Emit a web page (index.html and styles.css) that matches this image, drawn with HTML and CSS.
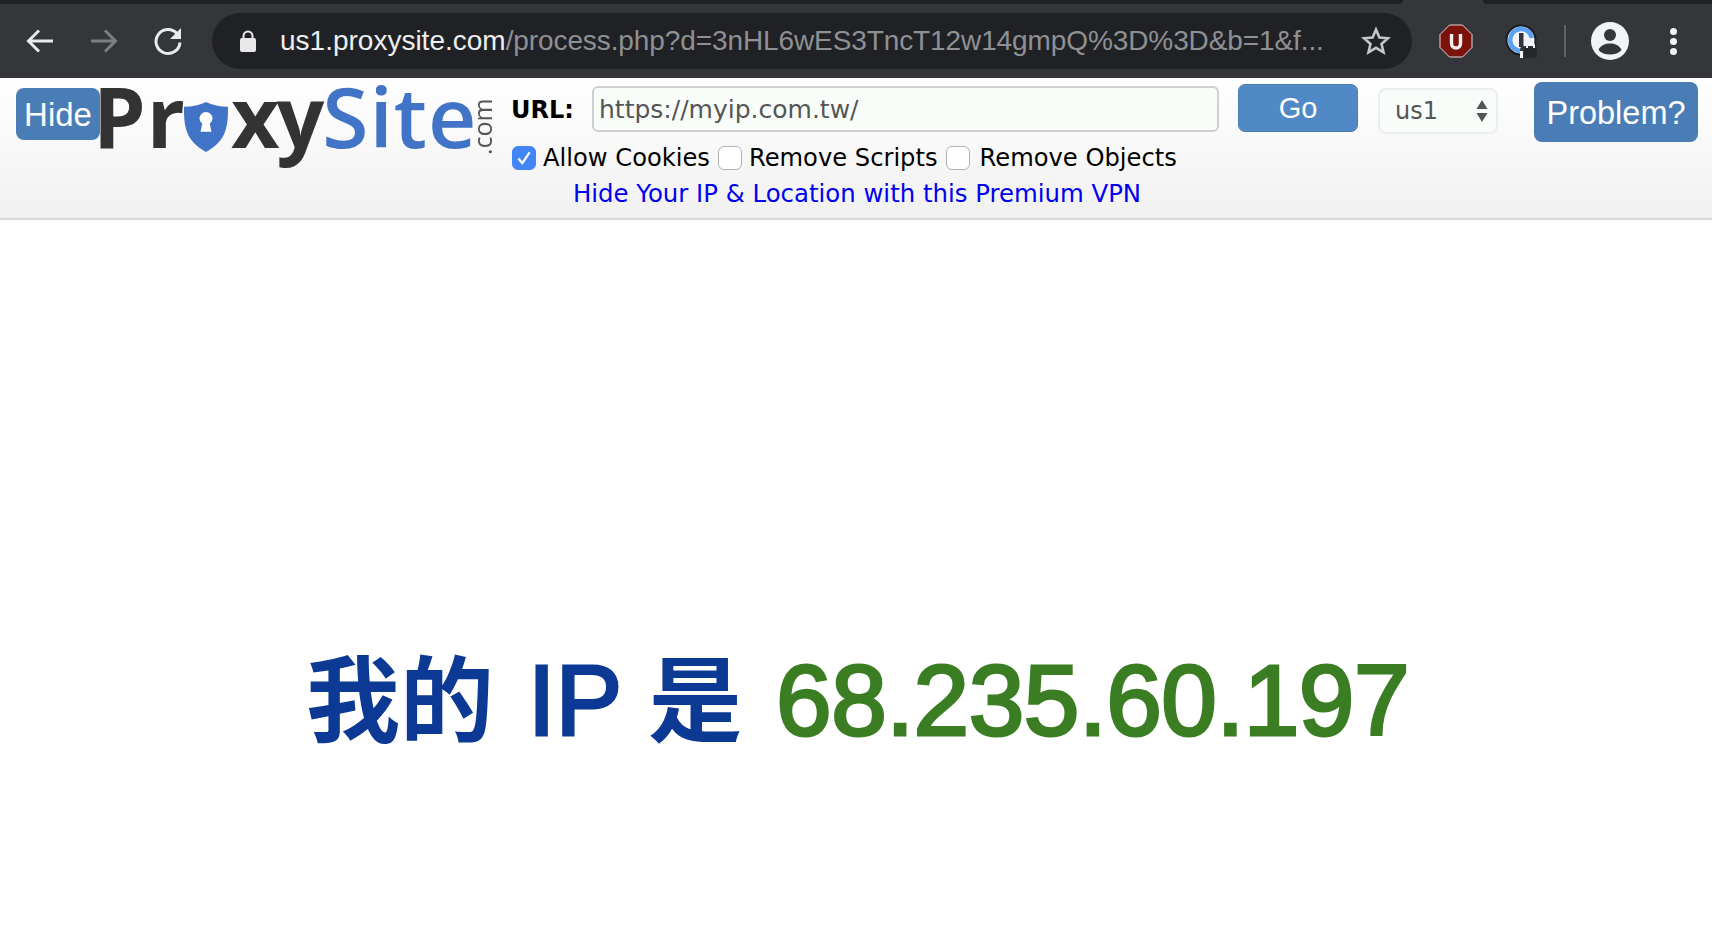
FILE: index.html
```html
<!DOCTYPE html>
<html lang="zh-Hant">
<head>
    <meta charset="UTF-8">
    <title>ProxySite - myip.com.tw</title>
    <link rel="stylesheet" href="styles.css">
</head>
<body>
    <!-- Browser chrome -->
    <div class="tabstrip">
        <div class="tab-left"></div>
        <div class="tab-right"></div>
    </div>
    <div class="toolbar">
        <svg class="nav-icon" width="32" height="32" viewBox="0 0 32 32"><path d="M29 16H5M15 5.500L4.500 16 15 26.500" fill="none" stroke="#e8eaed" stroke-width="3"/></svg>
        <svg class="nav-icon" width="32" height="32" viewBox="0 0 32 32"><path d="M3 16h24M17 5.500L27.500 16 17 26.500" fill="none" stroke="#7d7e81" stroke-width="3"/></svg>
        <svg class="nav-icon" width="32" height="32" viewBox="0 0 32 32"><path d="M25 8.500A12 12 0 1 0 28 17.500" fill="none" stroke="#e8eaed" stroke-width="3"/><path d="M29 3v11H18z" fill="#e8eaed"/></svg>

        <div class="omnibox">
            <svg class="lock" width="16" height="22" viewBox="0 0 16 22"><path d="M3.500 9V6a4.500 4.500 0 0 1 9 0v3" fill="none" stroke="#e8e8e8" stroke-width="2"/><rect x="0" y="8" width="16" height="14" rx="2" fill="#e8e8e8"/></svg>
            <div class="address"><span class="host">us1.proxysite.com</span>/process.php?d=3nHL6wES3TncT12w14gmpQ%3D%3D&amp;b=1&amp;f...</div>
            <svg class="star" width="30" height="30" viewBox="0 0 30 30"><path d="M15 3.500l3.400 8 8.600.7-6.500 5.700 2 8.400L15 21.800l-7.500 4.500 2-8.400L3 12.200l8.600-.7z" fill="none" stroke="#c4c5c7" stroke-width="2.600"/></svg>
        </div>

        <div class="extensions">
            <svg width="34" height="34" viewBox="0 0 34 34"><path d="M10.500 1h13L33 10.500v13L23.500 33h-13L1 23.500v-13z" fill="#7a130b" stroke="#e6d8d6" stroke-width="1"/><path d="M12.500 10v9.500a4.500 4.500 0 0 0 9 0V10" fill="none" stroke="#f4eeee" stroke-width="3.400"/></svg>
            <svg class="onepass" width="34" height="34" viewBox="0 0 34 34"><circle cx="16" cy="16" r="15.500" fill="#1b1c1f"/><circle cx="16" cy="16" r="13.500" fill="#f2f5fa"/><path d="M16 27A11 11 0 1 1 27 14" fill="none" stroke="#5aa2f3" stroke-width="4.500"/><rect x="14" y="9" width="4.500" height="14" fill="#33353a"/><path d="M15 34v-8a4 4 0 0 1 4-4h15v12z" fill="#35363a"/><rect x="15" y="27" width="3" height="7" fill="#f2f5fa"/><rect x="19" y="23" width="13" height="11" rx="2" fill="#26272a"/><path d="M22 24v-2.500a3.500 3.500 0 0 1 7 0V24" fill="none" stroke="#f2f5fa" stroke-width="2"/></svg>
            <div class="divider"></div>
            <svg class="avatar" width="38" height="38" viewBox="0 0 38 38"><circle cx="19" cy="19" r="19" fill="#f1f3f4"/><circle cx="19" cy="13" r="6" fill="#35363a"/><path d="M7.500 28c2-5 7-6.500 11.500-6.500S28.500 23 30.500 28c-2.600 3-6.800 4.500-11.500 4.500S10.100 31 7.500 28z" fill="#35363a"/></svg>
            <div class="kebab"><i></i><i></i><i></i></div>
        </div>
    </div>

    <!-- Proxy bar -->
    <div class="proxybar">
        <a class="btn btn-hide">Hide</a>
        <div class="logo">
            <span class="logo-word">Pr</span>
            <svg class="shield" width="44" height="50" viewBox="0 0 44 52" preserveAspectRatio="none"><path d="M22 0c6 3 14 5 22 5 0 8 0 18-3 26-3 9-10 16-19 21C13 47 6 40 3 31 0 23 0 13 0 5c8 0 16-2 22-5z" fill="#4174c6"/><circle cx="22" cy="17" r="6.500" fill="#fff"/><path d="M19 19h6l2.500 12h-11z" fill="#fff"/></svg>
            <span class="logo-word logo-xy">xy</span>
            <span class="logo-word logo-blue">Site</span>
            <span class="logo-com">.com</span>
        </div>

        <div class="form">
            <div class="form-row">
                <label class="url-label">URL:</label>
                <input class="url-input" type="text" value="https://myip.com.tw/">
                <a class="btn btn-go">Go</a>
                <div class="server">
                    <span>us1</span>
                    <svg width="12" height="24" viewBox="0 0 12 24"><path d="M6 1l5.500 9H.5zM6 23L.5 14h11z" fill="#555"/></svg>
                </div>
            </div>
            <div class="options">
                <span class="box box-on"><svg width="18" height="18" viewBox="0 0 16 16"><path d="M3 8.500l3.500 4L13 3" fill="none" stroke="#fff" stroke-width="2"/></svg></span>
                <span class="opt">Allow Cookies</span>
                <span class="box"></span>
                <span class="opt">Remove Scripts</span>
                <span class="box"></span>
                <span class="opt opt-last">Remove Objects</span>
            </div>
            <a class="vpn">Hide Your IP &amp; Location with this Premium VPN</a>
        </div>

        <a class="btn btn-problem">Problem?</a>
    </div>

    <!-- Proxied page -->
    <div class="page">
        <h1 class="myip"><span class="cjk cjk-first">我的</span> IP <span class="cjk">是</span> <span class="ip">68.235.60.197</span></h1>
    </div>
</body>
</html>
```

FILE: styles.css
```css
html, body {
    margin: 0;
    padding: 0;
    height: 100%;
    overflow: hidden;
    background: white;
}

body {
    display: flex;
    flex-direction: column;
    font-family: "DejaVu Sans", sans-serif;
}

/* browser chrome */
.tabstrip {
    display: flex;
    height: 4px;
    background: #35363a;
}

.tab-left {
    width: 1403px;
    background: #202124;
    border-bottom-right-radius: 4px;
}

.tab-right {
    flex: 1;
    margin-left: 80px;
    background: #202124;
    border-bottom-left-radius: 4px;
}

.toolbar {
    display: flex;
    align-items: center;
    height: 74px;
    background: #35363a;
    padding-left: 24px;
    box-sizing: border-box;
}

.nav-icon {
    margin-right: 32px;
    flex: none;
}

.omnibox {
    display: flex;
    align-items: center;
    width: 1200px;
    height: 56px;
    margin-left: -4px;
    margin-top: -1px;
    background: #202124;
    border-radius: 28px;
    box-sizing: border-box;
    padding-left: 28px;
    flex: none;
}

.lock {
    flex: none;
}

.address {
    margin-left: 24px;
    width: 1074px;
    white-space: nowrap;
    overflow: hidden;
    font-family: "Liberation Sans", sans-serif;
    font-size: 28px;
    letter-spacing: -0.1px;
    color: #8e9094;
}

.host {
    color: #eceef0;
    letter-spacing: 0;
}

.star {
    margin-left: 7px;
    flex: none;
}

.extensions {
    display: flex;
    align-items: center;
    flex: 1;
    padding-left: 27px;
}

.onepass {
    margin-left: 32px;
}

.divider {
    width: 2px;
    height: 32px;
    background: #5f6063;
    margin-left: 25px;
}

.avatar {
    margin-left: 25px;
}

.kebab {
    display: flex;
    flex-direction: column;
    gap: 3px;
    margin-left: 41px;
}

.kebab i {
    display: block;
    width: 7px;
    height: 7px;
    border-radius: 50%;
    background: #f1f3f4;
}

/* proxy bar */
.proxybar {
    display: flex;
    align-items: flex-start;
    height: 142px;
    box-sizing: border-box;
    background: linear-gradient(#ffffff, #f1f1f1);
    border-bottom: 2px solid #d6d6d6;
    padding-left: 16px;
    flex: none;
}

.btn {
    display: block;
    background: #4a7db5;
    color: white;
    font-family: "Liberation Sans", sans-serif;
    text-align: center;
    border-radius: 8px;
    box-sizing: border-box;
    flex: none;
}

.btn-hide {
    position: relative;
    z-index: 1;
    width: 84px;
    height: 52px;
    margin-top: 10px;
    font-size: 33px;
    line-height: 54px;
}

.logo {
    display: flex;
    align-items: flex-start;
    width: 398px;
    height: 92px;
    margin-left: -7px;
    flex: none;
    filter: blur(0.5px);
    font-family: "Open Sans", sans-serif;
    font-weight: 700;
    font-size: 84px;
    line-height: 76px;
    color: #333;
}

.logo-word {
    letter-spacing: 1px;
    white-space: nowrap;
}

.logo-xy {
    letter-spacing: -3px;
}

.logo-blue {
    color: #4174c6;
    font-weight: 600;
    letter-spacing: 1px;
    margin-left: 1px;
}

.shield {
    margin: 24px 3px 0 -2px;
    flex: none;
}

.logo-com {
    writing-mode: vertical-rl;
    transform: rotate(180deg);
    font-size: 25px;
    font-weight: 400;
    line-height: 16px;
    letter-spacing: 0;
    color: #555;
    margin-top: 17px;
    margin-left: -3px;
    height: 60px;
    text-align: left;
}

.form {
    display: flex;
    flex-direction: column;
    width: 987px;
    margin-left: 20px;
    flex: none;
}

.form-row {
    display: flex;
    align-items: flex-start;
}

.url-label {
    width: 81px;
    flex: none;
    font-weight: bold;
    font-size: 24px;
    line-height: 28px;
    margin-top: 18px;
    color: black;
}

.url-input {
    width: 627px;
    height: 46px;
    margin: 8px 0 0 0;
    padding: 0 5px 0 5px;
    box-sizing: border-box;
    border: 2px solid #cfcfcf;
    border-radius: 6px;
    background: #f8fdf9;
    font-family: "DejaVu Sans", sans-serif;
    font-size: 25px;
    color: #555;
    outline: none;
    flex: none;
}

.btn-go {
    width: 120px;
    height: 48px;
    margin: 6px 0 0 19px;
    background: #5089c6;
    border: 1px solid #4a7db5;
    border-radius: 7px;
    font-size: 29px;
    line-height: 46px;
}

.server {
    display: flex;
    align-items: center;
    justify-content: space-between;
    width: 120px;
    height: 46px;
    margin: 10px 0 0 20px;
    padding: 0 8px 0 15px;
    box-sizing: border-box;
    border: 2px solid #ededed;
    border-radius: 8px;
    background: #f8fdf9;
    font-size: 24px;
    color: #555;
    flex: none;
}

.options {
    display: flex;
    align-items: center;
    height: 26px;
    margin-top: 11px;
    margin-left: 1px;
    font-size: 24.2px;
    color: black;
}

.box {
    display: flex;
    align-items: center;
    justify-content: center;
    width: 24px;
    height: 24px;
    box-sizing: border-box;
    border: 1px solid #b5b5b5;
    border-radius: 6px;
    background: white;
    flex: none;
}

.box-on {
    background: #4285f4;
    border-color: #4285f4;
}

.opt {
    margin-left: 7px;
    margin-right: 8px;
    white-space: nowrap;
}

.opt-last {
    margin-left: 10px;
}

.vpn {
    display: block;
    width: 692px;
    margin-top: 9px;
    text-align: center;
    font-size: 24.4px;
    line-height: 28px;
    color: #0000ee;
}

.btn-problem {
    width: 164px;
    height: 60px;
    margin: 4px 0 0 36px;
    font-size: 32.500px;
    line-height: 62px;
}

/* proxied page */
.page {
    flex: 1;
    display: flex;
    justify-content: center;
    align-items: flex-start;
}

.myip {
    margin: 422px 0 0 3px;
    font-family: "Liberation Sans", "Noto Sans CJK TC", sans-serif;
    font-size: 100px;
    line-height: 116px;
    font-weight: normal;
    -webkit-text-stroke: 3px #0c3994;
    color: #0c3994;
    white-space: nowrap;
}

.cjk {
    font-size: 94px;
    font-weight: bold;
    -webkit-text-stroke: 0;
}

.cjk-first {
    margin-right: 6px;
}

.ip {
    margin-left: 6px;
    color: #3a7d23;
    letter-spacing: -0.5px;
    -webkit-text-stroke: 3px #3a7d23;
}
```
